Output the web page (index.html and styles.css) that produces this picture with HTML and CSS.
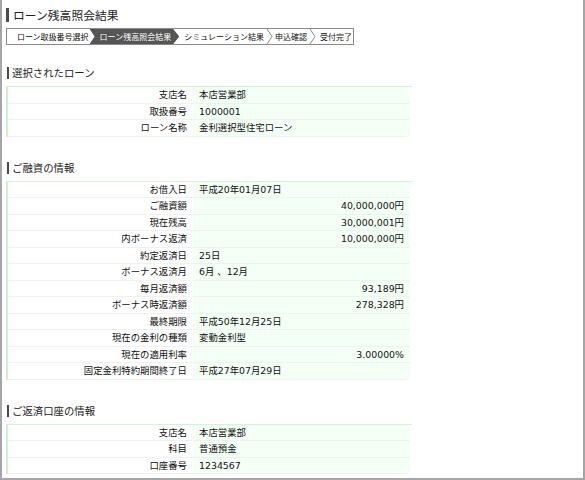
FILE: index.html
```html
<!DOCTYPE html>
<html lang="ja">
<head>
<meta charset="utf-8">
<title>ローン残高照会結果</title>
<link rel="stylesheet" href="styles.css">
</head>
<body>
<div class="frame">
  <h1 class="title">ローン残高照会結果</h1>
  <div class="steps">
    <span class="step first">ローン取扱番号選択</span>
    <span class="step active">ローン残高照会結果</span>
    <span class="step">シミュレーション結果</span>
    <svg class="sep" width="8" height="15" viewBox="0 0 8 15"><polyline points="1,0 6,7.5 1,15" fill="none" stroke="#888" stroke-width="1"/></svg>
    <span class="step">申込確認</span>
    <svg class="sep" width="8" height="15" viewBox="0 0 8 15"><polyline points="1,0 6,7.5 1,15" fill="none" stroke="#888" stroke-width="1"/></svg>
    <span class="step last">受付完了</span>
  </div>

  <h2 class="sec first-sec">選択されたローン</h2>
  <div class="info">
    <div class="row"><span class="k">支店名</span><span class="v">本店営業部</span></div>
    <div class="row"><span class="k">取扱番号</span><span class="v">1000001</span></div>
    <div class="row"><span class="k">ローン名称</span><span class="v">金利選択型住宅ローン</span></div>
  </div>

  <h2 class="sec">ご融資の情報</h2>
  <div class="info">
    <div class="row"><span class="k">お借入日</span><span class="v">平成20年01月07日</span></div>
    <div class="row"><span class="k">ご融資額</span><span class="v num">40,000,000円</span></div>
    <div class="row"><span class="k">現在残高</span><span class="v num">30,000,001円</span></div>
    <div class="row"><span class="k">内ボーナス返済</span><span class="v num">10,000,000円</span></div>
    <div class="row"><span class="k">約定返済日</span><span class="v">25日</span></div>
    <div class="row"><span class="k">ボーナス返済月</span><span class="v">6月 、12月</span></div>
    <div class="row"><span class="k">毎月返済額</span><span class="v num">93,189円</span></div>
    <div class="row"><span class="k">ボーナス時返済額</span><span class="v num">278,328円</span></div>
    <div class="row"><span class="k">最終期限</span><span class="v">平成50年12月25日</span></div>
    <div class="row"><span class="k">現在の金利の種類</span><span class="v">変動金利型</span></div>
    <div class="row"><span class="k">現在の適用利率</span><span class="v num">3.00000%</span></div>
    <div class="row"><span class="k">固定金利特約期間終了日</span><span class="v">平成27年07月29日</span></div>
  </div>

  <h2 class="sec">ご返済口座の情報</h2>
  <div class="info">
    <div class="row"><span class="k">支店名</span><span class="v">本店営業部</span></div>
    <div class="row"><span class="k">科目</span><span class="v">普通預金</span></div>
    <div class="row"><span class="k">口座番号</span><span class="v">1234567</span></div>
  </div>
</div>
</body>
</html>
```

FILE: styles.css
```css
html, body {
  margin: 0;
  padding: 0;
  background: #fff;
}

body {
  font-family: "DejaVu Sans", "Noto Sans CJK JP", sans-serif;
  color: #222;
}

.frame {
  box-sizing: border-box;
  width: 585px;
  height: 480px;
  border: solid #a6a6a6;
  border-width: 0 2px 2px 2px;
  padding-left: 4px;
  overflow: hidden;
}

.title {
  margin: 8px 0 0 0;
  height: 14px;
  line-height: 14px;
  border-left: 3px solid #4a4a4a;
  padding-left: 4px;
  font-family: "Noto Sans CJK JP", sans-serif;
  font-size: 11.8px;
  font-weight: normal;
  color: #222;
}

.steps {
  display: inline-flex;
  align-items: stretch;
  margin-top: 6px;
  height: 15px;
  border: 1px solid #8a8a8a;
  font-family: "Noto Sans CJK JP", sans-serif;
  font-size: 8px;
  line-height: 15px;
  color: #111;
}

.step {
  display: block;
  white-space: nowrap;
}

.step.first {
  padding: 0 1px 0 10px;
}

.step.active {
  background: #555;
  color: #fff;
  padding: 0 8px 0 10px;
  clip-path: polygon(0 0, calc(100% - 6px) 0, 100% 50%, calc(100% - 6px) 100%, 0 100%, 5px 50%);
}

.step + .step:not(.active) {
  padding-left: 5px;
}

.sep {
  display: block;
  margin: 0 1px 0 2px;
}

.step.last {
  padding: 0 1px 0 2px;
}

.sec {
  margin: 25px 0 0 1px;
  height: 12px;
  line-height: 12px;
  border-left: 2px solid #4a4a4a;
  padding-left: 3px;
  font-family: "Noto Sans CJK JP", sans-serif;
  font-size: 10.4px;
  font-weight: normal;
  color: #222;
}

.sec.first-sec {
  margin-top: 22px;
}

.info {
  margin: 7px 0 0 0;
  width: 404px;
  border-left: 2px solid #c9f2cf;
  border-top: 1px solid #d3f3d6;
  font-size: 9.4px;
  color: #111;
}

.row {
  display: grid;
  grid-template-columns: 185px 217px;
  height: 16.5px;
}

.k, .v {
  box-sizing: border-box;
  height: 16.5px;
  line-height: 15px;
  border-bottom: 1.5px solid #eff3ee;
  white-space: nowrap;
}

.k {
  text-align: right;
  padding-right: 6px;
  background: #fff;
}

.v {
  background: #f4fff5;
  padding: 0 6px;
  border-bottom-color: #e9f7ea;
}

.v.num {
  text-align: right;
}

.row:first-child .v {
  border-top-right-radius: 5px;
}

.row:last-child .v {
  border-bottom-right-radius: 5px;
}
```
